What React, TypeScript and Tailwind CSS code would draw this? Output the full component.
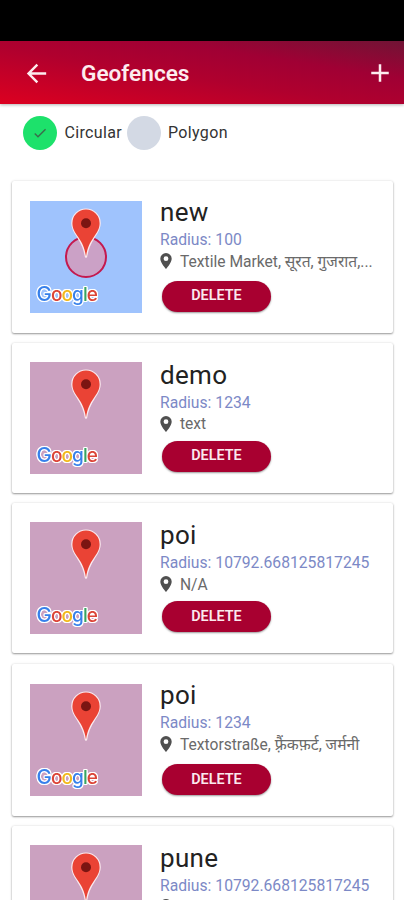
import React, { useState } from 'react';
import { MdAdd, MdArrowBack, MdCheck } from 'react-icons/md';

interface Geofence {
  id: number;
  name: string;
  radius: string;
  address: string;
  small?: boolean;
  tall?: boolean;
}

const geofences: Geofence[] = [
  { id: 1, name: 'new', radius: '100', address: 'Textile Market, सूरत, गुजरात,...', small: true, tall: true },
  { id: 2, name: 'demo', radius: '1234', address: 'text' },
  { id: 3, name: 'poi', radius: '10792.668125817245', address: 'N/A' },
  { id: 4, name: 'poi', radius: '1234', address: 'Textorstraße, फ़्रैंकफ़र्ट, जर्मनी', tall: true },
  { id: 5, name: 'pune', radius: '10792.668125817245', address: '' },
];

const LocationIcon: React.FC = () => (
  <svg width="12" height="16" viewBox="0 0 12 16" className="mb-0.5 shrink-0 text-[#505050]" fill="currentColor">
    <path
      fillRule="evenodd"
      d="M6 0A5.7 5.7 0 0 0 .3 5.7C.3 9.8 6 16 6 16S11.7 9.8 11.7 5.7A5.7 5.7 0 0 0 6 0ZM6 3.3A2.4 2.4 0 1 1 6 8.1A2.4 2.4 0 0 1 6 3.3Z"
    />
  </svg>
);

const MapPreview: React.FC<{ small?: boolean }> = ({ small }) => (
  <svg width="112" height="112" viewBox="0 0 112 112" className="shrink-0">
    <rect width="112" height="112" fill={small ? '#9fc3fd' : '#cba1c0'} />
    {small && <circle cx="56" cy="56" r="20" fill="#cba1c6" stroke="#c4194f" strokeWidth="2" />}
    <path
      d="M56 55.5C54.6 46.5 52.3 42 48.2 36C44.8 31 42.4 27.6 42.4 22.2A13.6 13.6 0 0 1 69.6 22.2C69.6 27.6 67.2 31 63.8 36C59.7 42 57.4 46.5 56 55.5Z"
      fill="#ea4335"
      stroke="#fbe9ee"
      strokeWidth="2.4"
      paintOrder="stroke"
      strokeLinejoin="round"
    />
    <circle cx="56" cy="22.3" r="5" fill="#7b1512" />
    <text
      x="6.5"
      y="99.5"
      fontSize="19"
      letterSpacing="-0.9"
      className="font-['Inter',sans-serif] font-medium [filter:drop-shadow(1px_0_0.4px_#fff)_drop-shadow(-1px_0_0.4px_#fff)_drop-shadow(0_1px_0.4px_#fff)_drop-shadow(0_-1px_0.4px_#fff)]"
    >
      <tspan fill="#3780ea" fontSize="20.5">G</tspan>
      <tspan fill="#dc4437">o</tspan>
      <tspan fill="#f2b91d">o</tspan>
      <tspan fill="#3780ea">g</tspan>
      <tspan fill="#38a561">l</tspan>
      <tspan fill="#dc4437">e</tspan>
    </text>
  </svg>
);

const GeofenceCard: React.FC<{ fence: Geofence }> = ({ fence }) => (
  <div
    className={`flex items-center rounded-[2px] bg-white pl-[18px] pr-4 shadow-[0_1px_2px_rgba(0,0,0,0.38),0_0_3px_rgba(0,0,0,0.1)] ${
      fence.tall ? 'h-[152px]' : 'h-[149.8px]'
    }`}
  >
    <MapPreview small={fence.small} />
    <div className={`ml-[18px] flex h-full min-w-0 flex-1 flex-col items-start ${fence.tall ? 'pt-[15px]' : 'pt-[15.5px]'}`}>
      <h2 className="text-[26px] leading-8 tracking-[0.3px] text-[#222]">{fence.name}</h2>
      <p className="whitespace-nowrap pt-px text-[15.7px] leading-[21.5px] text-[#7c89c6]">Radius: {fence.radius}</p>
      <div className={`flex w-full items-center ${fence.tall ? 'mb-[7px] h-6' : 'mb-[5px] h-[23px]'}`}>
        <LocationIcon />
        <span className="ml-2 whitespace-nowrap pt-px text-[15.6px] text-[#6a6a6a]">{fence.address}</span>
      </div>
      <button className="ml-0.5 h-[30.5px] w-[109px] shrink-0 rounded-full bg-[#a80030] text-[14.4px] font-semibold text-[#fbe9ee] shadow-[0_1px_2px_rgba(0,0,0,0.4)]">
        DELETE
      </button>
    </div>
  </div>
);

const App: React.FC = () => {
  const [shape, setShape] = useState('Circular');

  return (
    <div className="flex h-[900px] w-full flex-col overflow-hidden bg-white font-['Roboto','Noto_Sans',sans-serif]">
      <div className="h-[41px] shrink-0 bg-black" />
      <header className="flex h-[63px] shrink-0 items-center bg-[linear-gradient(to_top_right,#dc0020_0%,#b0002e_45%,#a00034_70%,#701435_100%)] pl-[22px] pr-[9px] text-[#fdecef] shadow-[0_1px_3px_rgba(0,0,0,0.3)]">
        <MdArrowBack size={29} className="mt-0.5" />
        <h1 className="ml-[30px] flex-1 pt-0.5 text-[22.6px] font-semibold">Geofences</h1>
        <MdAdd size={30} />
      </header>

      <div className="flex h-[58px] shrink-0 items-center pl-[23px] text-base tracking-[0.34px] text-[#333]">
        {['Circular', 'Polygon'].map(option => (
          <button key={option} onClick={() => setShape(option)} className="mr-[4.5px] flex items-center">
            <span
              className={`mr-[7.5px] flex size-[34px] items-center justify-center rounded-full ${
                shape === option ? 'bg-[#1de16b]' : 'bg-[#d3d9e4]'
              }`}
            >
              {shape === option && <MdCheck size={16} className="text-[#3b6b4c]" />}
            </span>
            {option}
          </button>
        ))}
      </div>

      <div className="flex flex-col gap-[10.5px] pl-3 pr-[11px] pt-[18.5px]">
        {geofences.map(fence => (
          <GeofenceCard key={fence.id} fence={fence} />
        ))}
      </div>
    </div>
  );
};

export default App;
